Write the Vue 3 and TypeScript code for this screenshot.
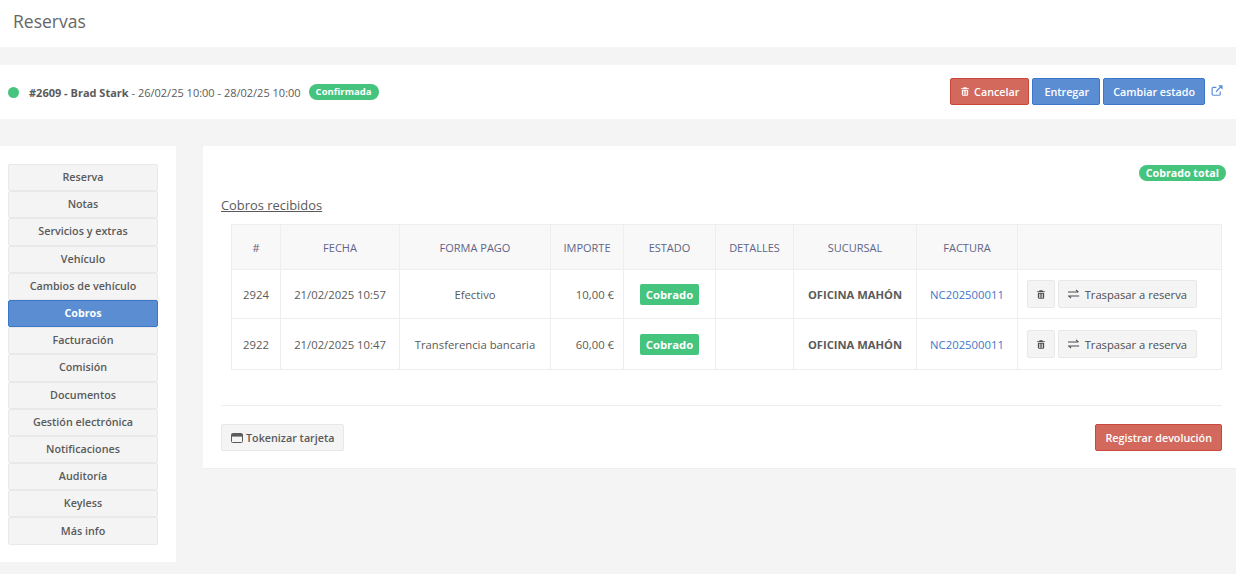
<script setup lang="ts">
const tabs = [
  'Reserva',
  'Notas',
  'Servicios y extras',
  'Vehículo',
  'Cambios de vehículo',
  'Cobros',
  'Facturación',
  'Comisión',
  'Documentos',
  'Gestión electrónica',
  'Notificaciones',
  'Auditoría',
  'Keyless',
  'Más info',
];

const columns = [
  { label: '#', width: 49 },
  { label: 'FECHA', width: 119 },
  { label: 'FORMA PAGO', width: 151 },
  { label: 'IMPORTE', width: 73 },
  { label: 'ESTADO', width: 92 },
  { label: 'DETALLES', width: 78 },
  { label: 'SUCURSAL', width: 123 },
  { label: 'FACTURA', width: 101 },
  { label: '', width: 204 },
];

const payments = [
  { id: 2924, date: '21/02/2025 10:57', method: 'Efectivo', amount: '10,00 €', invoice: 'NC202500011' },
  { id: 2922, date: '21/02/2025 10:47', method: 'Transferencia bancaria', amount: '60,00 €', invoice: 'NC202500011' },
];

const trashPath =
  'M5 1.5h4l.6 1.3H12.5v1.2h-11V2.8h2.9zM2.6 5h8.8v7.2c0 .7-.5 1.3-1.2 1.3H3.8c-.7 0-1.2-.6-1.2-1.3zM4.6 6.3v6h1v-6zm1.9 0v6h1v-6zm1.9 0v6h1v-6z';
</script>

<template>
  <div class="page">
    <header class="title-bar">Reservas</header>

    <section class="booking-bar">
      <div class="booking-info">
        <span class="dot"></span>
        <span class="booking-text"><b>#2609 - Brad Stark</b> - 26/02/25 10:00 - 28/02/25 10:00</span>
        <span class="pill small">Confirmada</span>
      </div>
      <div class="booking-actions">
        <button class="btn btn-red">
          <svg class="icon" width="10" height="11" viewBox="0 0 14 15" fill="currentColor"><path :d="trashPath" /></svg>
          Cancelar
        </button>
        <button class="btn btn-blue wide">Entregar</button>
        <button class="btn btn-blue">Cambiar estado</button>
        <svg class="external" width="12" height="11" viewBox="0 0 13 12" fill="none" stroke="#5b8dd3" stroke-width="1.3">
          <path d="M10 7v3a1.2 1.2 0 0 1-1.2 1.2H2.4a1.2 1.2 0 0 1-1.2-1.2V3.8a1.2 1.2 0 0 1 1.2-1.2h3.4" />
          <path d="M5.4 7.4 11.2 1.4" />
          <path d="M7.8.4h4.8v4.8z" fill="#5b8dd3" stroke="none" />
        </svg>
      </div>
    </section>

    <div class="content">
      <nav class="side">
        <button v-for="tab in tabs" :key="tab" class="tab" :class="{ active: tab === 'Cobros' }">{{ tab }}</button>
      </nav>

      <main class="panel">
        <div class="panel-status"><span class="pill">Cobrado total</span></div>
        <h3 class="panel-title">Cobros recibidos</h3>

        <div class="table-wrap">
          <table>
            <colgroup>
              <col v-for="col in columns" :key="col.label" :style="{ width: col.width + 'px' }" />
            </colgroup>
            <thead>
              <tr>
                <th v-for="col in columns" :key="col.label">{{ col.label }}</th>
              </tr>
            </thead>
            <tbody>
              <tr v-for="p in payments" :key="p.id">
                <td>{{ p.id }}</td>
                <td>{{ p.date }}</td>
                <td>{{ p.method }}</td>
                <td class="amount">{{ p.amount }}</td>
                <td><span class="label">Cobrado</span></td>
                <td></td>
                <td class="branch">OFICINA MAHÓN</td>
                <td><a class="invoice">{{ p.invoice }}</a></td>
                <td class="row-actions">
                  <button class="btn btn-grey square">
                    <svg width="10" height="11" viewBox="0 0 14 15" fill="currentColor"><path :d="trashPath" /></svg>
                  </button>
                  <button class="btn btn-grey">
                    <svg class="icon" width="12" height="10" viewBox="0 0 12 10" fill="none" stroke="currentColor" stroke-width="1.1">
                      <path d="M0 3h10.5M8.3.7l2.5 2.3M0 7h11.5M3.2 9.3.7 7" />
                    </svg>
                    Traspasar a reserva
                  </button>
                </td>
              </tr>
            </tbody>
          </table>
        </div>

        <div class="panel-footer">
          <button class="btn btn-grey token">
            <svg width="12" height="10" viewBox="0 0 12 10" fill="none">
              <rect x="0.5" y="0.5" width="11" height="9" rx="1" stroke="currentColor" />
              <rect x="0.5" y="1" width="11" height="2.6" fill="currentColor" />
            </svg>
            Tokenizar tarjeta
          </button>
          <button class="btn btn-red">Registrar devolución</button>
        </div>
      </main>
    </div>
  </div>
</template>

<style>
html,
body {
  margin: 0;
  background: #f4f4f4;
}
</style>

<style scoped>
.page {
  min-height: 574px;
  background: #f4f4f4;
  font-family: 'Open Sans', 'Liberation Sans', sans-serif;
  color: #5a5a5a;
  font-size: 11px;
}

.title-bar {
  height: 47px;
  background: #fff;
  padding: 0 13px;
  font-size: 17.5px;
  line-height: 43px;
  color: #666;
  box-sizing: border-box;
}

.booking-bar {
  margin-top: 18px;
  height: 54px;
  background: #fff;
  display: flex;
  align-items: center;
  justify-content: space-between;
  padding: 0 13px 0 8px;
}

.booking-info {
  display: flex;
  align-items: center;
}

.dot {
  width: 11px;
  height: 11px;
  border-radius: 50%;
  background: #44c47c;
  margin-right: 10px;
}

.booking-text {
  font-size: 11px;
}

.pill {
  display: inline-block;
  background: #44c47c;
  color: #fff;
  font-weight: 700;
  font-size: 10.7px;
  line-height: 16px;
  padding: 0 7px;
  border-radius: 8px;
}

.pill.small {
  font-size: 9.5px;
}

.booking-info .pill {
  margin-left: 8px;
  margin-top: -1px;
}

.booking-actions {
  display: flex;
  align-items: center;
  gap: 3px;
  margin-top: -1px;
}

.external {
  margin: 7px 0 0 3px;
  align-self: flex-start;
}

.btn {
  font-family: inherit;
  font-size: 10.75px;
  font-weight: 600;
  height: 27px;
  padding: 0 9px;
  border-radius: 2px;
  border: 1px solid transparent;
  display: inline-flex;
  align-items: center;
  justify-content: center;
  box-sizing: border-box;
  white-space: nowrap;
}

.icon {
  margin-right: 5px;
}

.booking-actions .btn-red .icon {
  margin-right: 4px;
}

.btn-red {
  background: #d2695c;
  border-color: #c9483b;
  color: #fff;
}

.btn-blue {
  background: #5b8dd3;
  border-color: #3b76c9;
  color: #fff;
}

.btn-blue.wide {
  padding: 0 10px 0 11px;
}

.btn-grey {
  background: #f4f4f4;
  border-color: #e8e8e8;
  color: #5a5a5a;
}

.content {
  display: flex;
  align-items: flex-start;
  margin-top: 27px;
}

.side {
  width: 176px;
  height: 416px;
  background: #fff;
  box-sizing: border-box;
  padding: 18px 18px 0 8px;
  flex: none;
}

.tab {
  display: block;
  width: 150px;
  height: 27.2px;
  padding: 0 0 1px;
  border: 1px solid #e9e9e9;
  border-radius: 2px;
  background: #f4f4f4;
  color: #5a5a5a;
  font-family: inherit;
  font-size: 10.75px;
  font-weight: 600;
  box-sizing: border-box;
}

.tab.active {
  background: #5b8dd3;
  border-color: #3b76c9;
  color: #fff;
  font-weight: 700;
}

.panel {
  margin-left: 27px;
  flex: 1;
  height: 323px;
  background: #fff;
  box-sizing: border-box;
  padding: 19px 15px 0 18px;
  border-bottom: 1px solid #eee;
}

.panel-status {
  display: flex;
  justify-content: flex-end;
  margin-right: -4px;
}

.panel-title {
  margin: 15px 0 0;
  font-size: 12.9px;
  font-weight: 400;
  line-height: 18px;
  text-decoration: underline;
  color: #5a5a5a;
}

.table-wrap {
  margin: 10px 0 0 10px;
}

table {
  width: 990px;
  table-layout: fixed;
  border-collapse: collapse;
  font-size: 11.3px;
}

th,
td {
  border: 1px solid #eee;
  text-align: center;
  padding: 0;
  white-space: nowrap;
}

th {
  height: 44px;
  background: #f8f8f8;
  font-weight: 400;
  font-size: 11px;
  color: #5f6488;
}

tbody tr:first-child td {
  height: 48px;
}

tbody tr:last-child td {
  height: 50px;
}

.amount {
  text-align: right;
  padding-right: 9px;
}

.label {
  display: inline-block;
  background: #44c47c;
  color: #fff;
  font-weight: 700;
  line-height: 21px;
  padding: 0 6px;
  border-radius: 2px;
}

.branch {
  font-weight: 700;
  font-size: 11.2px;
}

.invoice {
  color: #3d77c8;
}

.row-actions {
  text-align: left;
  padding-left: 9px;
}

.row-actions .btn {
  height: 28px;
  vertical-align: middle;
  font-weight: 400;
  font-size: 11.2px;
  color: #4d4d4d;
}

.row-actions .btn + .btn {
  margin-left: 3px;
}

.row-actions .square {
  width: 28px;
  padding: 0;
}

.row-actions .btn:not(.square) {
  width: 139px;
}

.panel-footer {
  margin-top: 35px;
  border-top: 1px solid #eee;
  padding-top: 18px;
  display: flex;
  justify-content: space-between;
}

.token svg {
  margin-right: 3px;
}
</style>
